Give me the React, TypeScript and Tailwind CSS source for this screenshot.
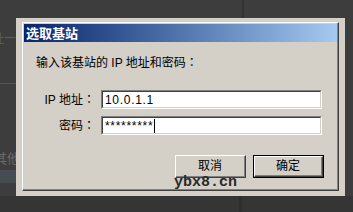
const font = "font-['Liberation_Sans','Noto_Sans_CJK_SC',sans-serif]";

// centred full-width colon, as in the original dialog font
function Colon() {
  return <span className="font-['Noto_Sans_CJK_JP',sans-serif]">：</span>;
}

function Field({ children }: { children: React.ReactNode }) {
  return (
    <div className="w-[221px] h-[19px] border-t border-l border-[#808080] border-b-white border-r-white border-b border-r">
      <div className="h-full border-t border-l border-[#404040] border-b border-r border-b-[#d4d0c8] border-r-[#d4d0c8] bg-white flex items-center pl-[2px] text-[12px] tracking-[0.7px] text-black">
        {children}
      </div>
    </div>
  );
}

function Button({ label, primary }: { label: string; primary?: boolean }) {
  const face = (
    <div className="h-full border-t border-l border-white border-b border-r border-b-[#404040] border-r-[#404040]">
      <div className="h-full border-b border-r border-[#808080] flex items-center justify-center text-[12px] text-black">
        {label}
      </div>
    </div>
  );
  return (
    <div className={`w-[71px] h-[23px] ${primary ? "border border-black" : ""}`}>{face}</div>
  );
}

export default function App() {
  return (
    <div className={`relative w-[353px] h-[212px] overflow-hidden bg-[#3d3d3d] ${font}`}>
      {/* desktop behind the dialog */}
      <div className="absolute left-[242px] top-0 w-[2px] h-[18px] bg-[#333]" />
      <div className="absolute left-0 top-[196px] w-[353px] h-[16px] bg-[#353535]" />
      <div className="absolute left-[239px] top-[196px] w-[3px] h-[16px] bg-[#2e2e2e]" />
      <div className="absolute left-[-8px] top-[30px] text-[12px] text-[#5c5c5c]">址一</div>
      <div className="absolute left-0 top-[83px] w-[16px] h-px bg-[#555]" />
      <div className="absolute left-[-6px] top-[149px] text-[13px] text-[#6a6a6a]">其他</div>
      <div className="absolute left-0 top-[170px] w-[16px] h-[13px] bg-[#454c52]" />

      {/* dialog window */}
      <div className="absolute left-[16px] top-[18px] w-[329px] h-[178px] bg-[#d4d0c8] pt-[4px] pl-[6px] pr-[6px] pb-[5px] flex">
        <div className="flex-1 flex border-t border-l border-white border-b border-r border-b-[#404040] border-r-[#404040]">
          <div className="flex-1 flex flex-col pl-[1px] pt-[1px] border-b border-r border-[#808080]">
            <div className="h-[18px] flex items-center pl-[2px] bg-gradient-to-r from-[#0a246a] to-[#a6caf0] text-white text-[13px] font-bold leading-none">
              选取基站
            </div>

            <div className="mt-[12px] pl-[12px] text-[12px] leading-[16px] text-black">
              输入该基站的 IP 地址和密码<Colon />
            </div>

            <div className="mt-[19px] flex items-center">
              <div className="w-[71px] text-right text-[12px] text-black">
                IP 地址<Colon />
              </div>
              <div className="ml-[6px]">
                <Field>10.0.1.1</Field>
              </div>
            </div>

            <div className="mt-[7px] flex items-center">
              <div className="w-[71px] text-right text-[12px] text-black">
                密码<Colon />
              </div>
              <div className="ml-[6px]">
                <Field>
                  *********
                  <span className="inline-block w-px h-[14px] bg-black ml-[1px]" />
                </Field>
              </div>
            </div>

            <div className="mt-[20px] flex justify-end gap-[7px] pr-[13px]">
              <Button label="取消" />
              <Button label="确定" primary />
            </div>
          </div>
        </div>
      </div>

      {/* watermark */}
      <div className="absolute left-[174px] top-[175px] font-['Liberation_Mono',monospace] text-[15px] font-bold leading-none text-[#2a2a2a]">
        ybx8.cn
      </div>
    </div>
  );
}
